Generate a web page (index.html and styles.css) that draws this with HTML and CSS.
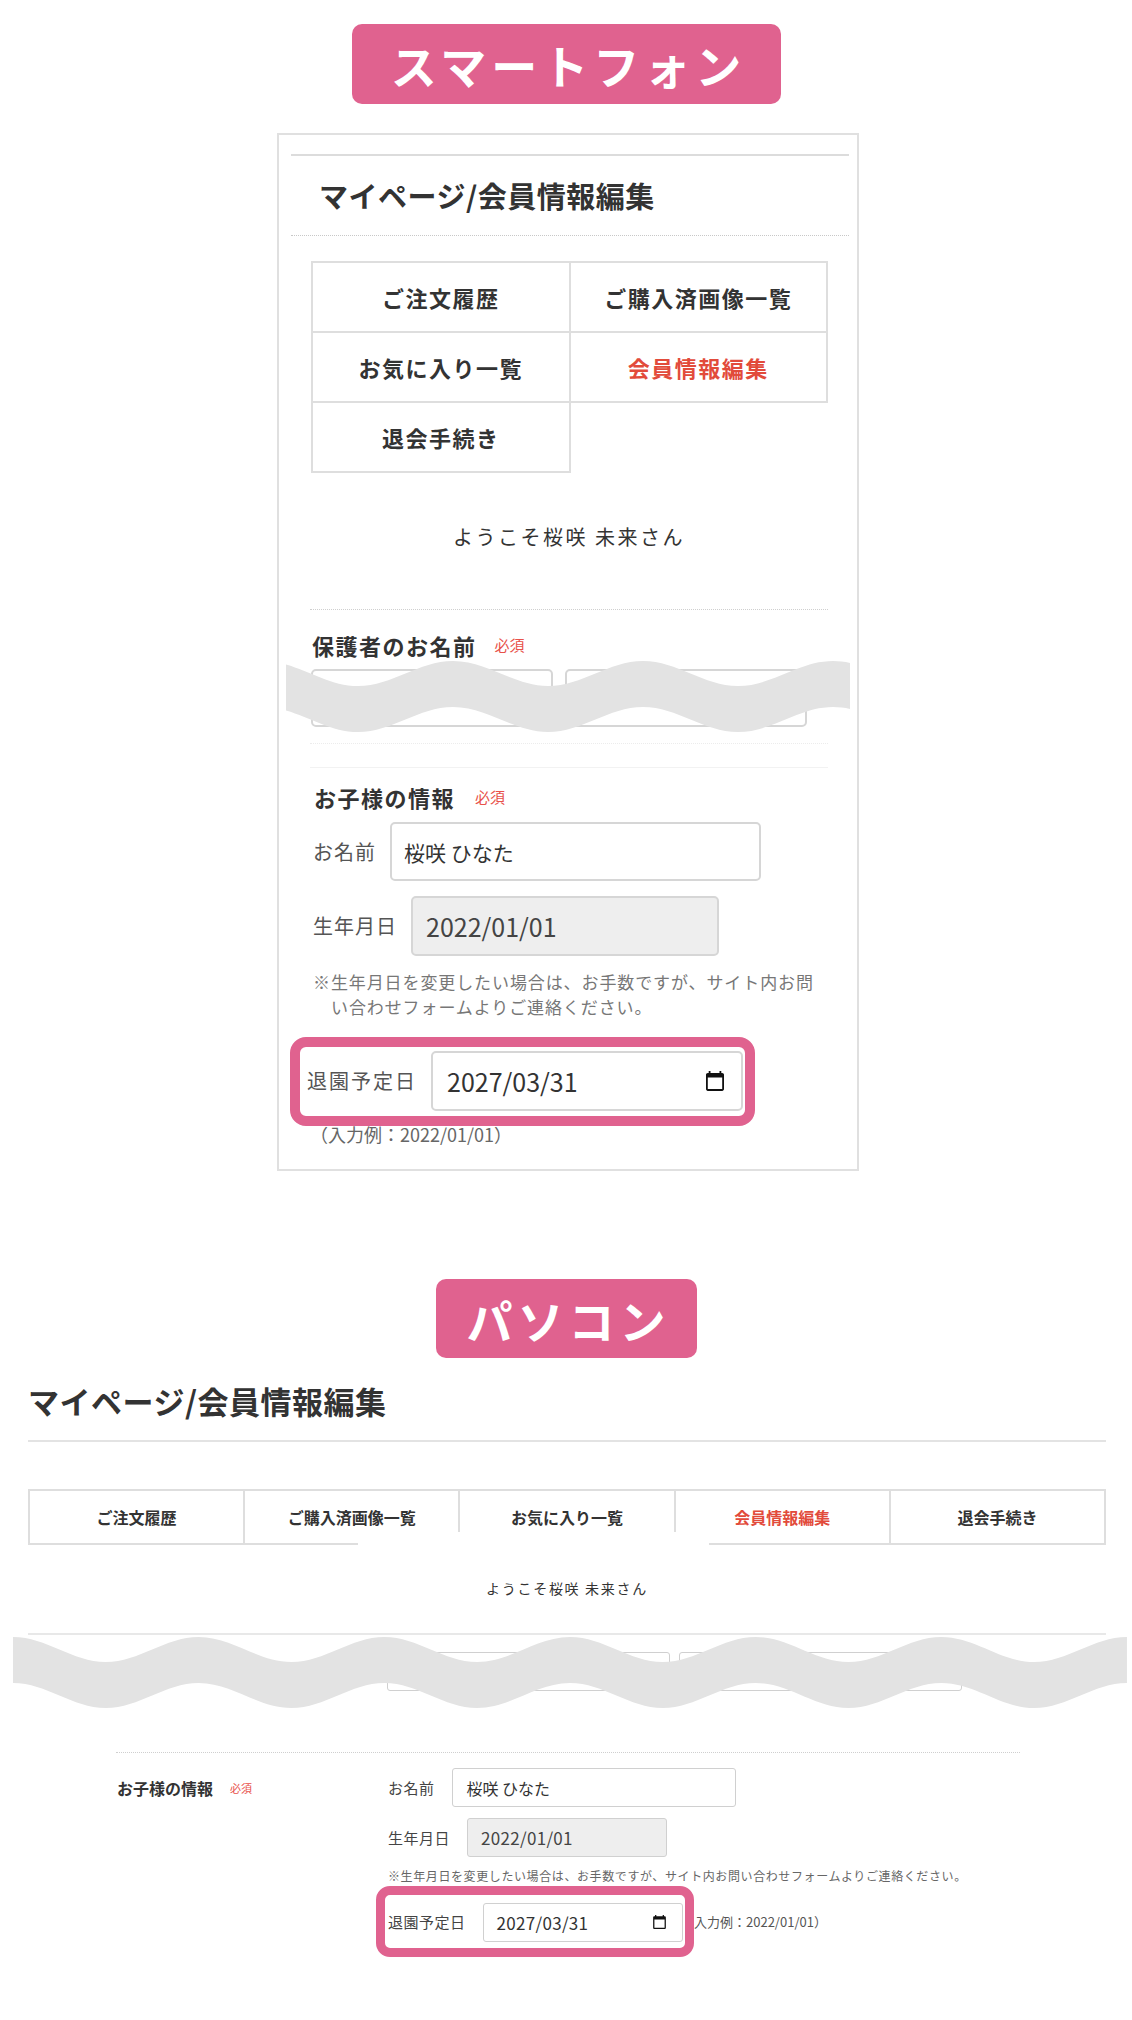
FILE: index.html
```html
<!DOCTYPE html>
<html lang="ja">
<head>
<meta charset="utf-8">
<title>マイページ/会員情報編集</title>
<link rel="stylesheet" href="styles.css">
</head>
<body>
<section class="sp">
  <div class="badge-row"><div class="badge badge-sp">スマートフォン</div></div>
  <div class="phone">
    <div class="sp-head"><h1 class="sp-title">マイページ/会員情報編集</h1></div>
    <div class="sp-body">
      <ul class="sp-menu">
        <li>ご注文履歴</li>
        <li>ご購入済画像一覧</li>
        <li>お気に入り一覧</li>
        <li class="active">会員情報編集</li>
        <li>退会手続き</li>
      </ul>
      <p class="sp-welcome">ようこそ桜咲 未来さん</p>
      <div class="sp-guardian">
        <div class="sp-label">保護者のお名前<span class="req">必須</span></div>
        <div class="sp-inputs"><span class="sp-input"></span><span class="sp-input"></span></div>
        <svg class="wave sp-wave" width="564" height="71" viewBox="0 0 564 71" aria-hidden="true">
          <path fill="#e3e3e3" d="M-23,0 c34.6,0 60.4,25 95,25 c34.6,0 60.4,-25 95,-25 c34.6,0 60.4,25 95,25 c34.6,0 60.4,-25 95,-25 c34.6,0 60.4,25 95,25 c34.6,0 60.4,-25 95,-25 c34.6,0 60.4,25 95,25 l0,46 c-34.6,0 -60.4,-25 -95,-25 c-34.6,0 -60.4,25 -95,25 c-34.6,0 -60.4,-25 -95,-25 c-34.6,0 -60.4,25 -95,25 c-34.6,0 -60.4,-25 -95,-25 c-34.6,0 -60.4,25 -95,25 c-34.6,0 -60.4,-25 -95,-25 z"/>
        </svg>
      </div>
      <div class="sp-child">
        <div class="sp-label sp-label-child">お子様の情報<span class="req req-child">必須</span></div>
        <div class="sp-row sp-row-name">
          <span class="sp-rlabel">お名前</span>
          <span class="sp-field sp-field-name">桜咲 ひなた</span>
        </div>
        <div class="sp-row sp-row-birth">
          <span class="sp-rlabel">生年月日</span>
          <span class="sp-field sp-field-birth">2022/01/01</span>
        </div>
        <p class="sp-note">※生年月日を変更したい場合は、お手数ですが、サイト内お問<br>い合わせフォームよりご連絡ください。</p>
        <div class="sp-mark">
          <span class="sp-rlabel sp-rlabel-leave">退園予定日</span>
          <span class="sp-field sp-field-leave">2027/03/31
            <svg class="cal" width="18" height="20" viewBox="2 1 20 22" aria-hidden="true"><path fill="#111" d="M20 3h-1V1h-2v2H7V1H5v2H4c-1.1 0-2 .9-2 2v16c0 1.1.9 2 2 2h16c1.1 0 2-.9 2-2V5c0-1.1-.9-2-2-2zm0 18H4V8h16v13z"/></svg>
          </span>
        </div>
        <p class="sp-hint">（入力例：2022/01/01）</p>
      </div>
    </div>
  </div>
</section>

<section class="pcs">
  <div class="badge-row"><div class="badge badge-pc">パソコン</div></div>
  <div class="pc">
    <h1 class="pc-title">マイページ/会員情報編集</h1>
    <ul class="pc-tabs">
      <li>ご注文履歴</li>
      <li>ご購入済画像一覧</li>
      <li>お気に入り一覧</li>
      <li class="active">会員情報編集</li>
      <li>退会手続き</li>
      <span class="cutout"></span>
    </ul>
    <p class="pc-welcome">ようこそ桜咲 未来さん</p>
    <div class="pc-guardian">
      <div class="pc-inputs"><span class="pc-input"></span><span class="pc-input"></span></div>
      <svg class="wave pc-wave" width="1114" height="71" viewBox="0 0 1114 71" aria-hidden="true">
        <path fill="#e3e3e3" d="M0,0 c33.81,0 59.02,25 92.83,25 c33.81,0 59.02,-25 92.83,-25 c33.81,0 59.02,25 92.83,25 c33.81,0 59.02,-25 92.83,-25 c33.81,0 59.02,25 92.83,25 c33.81,0 59.02,-25 92.83,-25 c33.81,0 59.02,25 92.83,25 c33.81,0 59.02,-25 92.83,-25 c33.81,0 59.02,25 92.83,25 c33.81,0 59.02,-25 92.83,-25 c33.81,0 59.02,25 92.83,25 c33.81,0 59.02,-25 92.83,-25 l0,46 c-33.81,0 -59.02,25 -92.83,25 c-33.81,0 -59.02,-25 -92.83,-25 c-33.81,0 -59.02,25 -92.83,25 c-33.81,0 -59.02,-25 -92.83,-25 c-33.81,0 -59.02,25 -92.83,25 c-33.81,0 -59.02,-25 -92.83,-25 c-33.81,0 -59.02,25 -92.83,25 c-33.81,0 -59.02,-25 -92.83,-25 c-33.81,0 -59.02,25 -92.83,25 c-33.81,0 -59.02,-25 -92.83,-25 c-33.81,0 -59.02,25 -92.83,25 c-33.81,0 -59.02,-25 -92.83,-25 z"/>
      </svg>
    </div>
    <div class="pc-child">
      <div class="pc-left">お子様の情報<span class="req req-pc">必須</span></div>
      <div class="pc-right">
        <div class="pc-row">
          <span class="pc-rlabel">お名前</span>
          <span class="pc-field pc-field-name">桜咲 ひなた</span>
        </div>
        <div class="pc-row pc-row-birth">
          <span class="pc-rlabel">生年月日</span>
          <span class="pc-field pc-field-birth">2022/01/01</span>
        </div>
        <p class="pc-note">※生年月日を変更したい場合は、お手数ですが、サイト内お問い合わせフォームよりご連絡ください。</p>
        <div class="pc-leave">
          <div class="pc-mark">
            <span class="pc-rlabel">退園予定日</span>
            <span class="pc-field pc-field-leave">2027/03/31
              <svg class="cal" width="13" height="14" viewBox="2 1 20 22" aria-hidden="true"><path fill="#111" d="M20 3h-1V1h-2v2H7V1H5v2H4c-1.1 0-2 .9-2 2v16c0 1.1.9 2 2 2h16c1.1 0 2-.9 2-2V5c0-1.1-.9-2-2-2zm0 18H4V8h16v13z"/></svg>
            </span>
          </div>
          <span class="pc-hint">（入力例：2022/01/01）</span>
        </div>
      </div>
    </div>
  </div>
</section>
</body>
</html>
```

FILE: styles.css
```css
* {
  box-sizing: border-box;
  margin: 0;
  padding: 0;
}

body {
  width: 1132px;
  background: #fff;
  color: #333;
  font-family: "Noto Sans CJK JP", "Noto Sans", sans-serif;
}

/* ---------- badges ---------- */
.badge-row {
  display: flex;
  justify-content: center;
}

.badge {
  display: flex;
  align-items: center;
  justify-content: center;
  background: #e0628f;
  color: #fff;
  font-weight: 700;
  font-size: 46px;
  letter-spacing: 5px;
  padding-left: 5px;
  border-radius: 10px;
}

.badge-sp {
  width: 429px;
  height: 80px;
  margin-top: 24px;
}

.badge-pc {
  width: 261px;
  height: 79px;
  margin-top: 108px;
}

.req {
  color: #e8514a;
  font-weight: 400;
  font-size: 15px;
  letter-spacing: 0;
  margin-left: 18px;
}

.wave {
  position: absolute;
  display: block;
}

.cal {
  display: block;
  flex: none;
}

/* ---------- smartphone ---------- */
.phone {
  width: 582px;
  margin: 29px 0 0 277px;
  border: 2px solid #e0e0e0;
  padding-bottom: 24px;
}

.sp-head {
  margin: 19px 8px 0 12px;
  border-top: 2px solid #dcdcdc;
  border-bottom: 1px dotted #c8c8c8;
  padding: 19px 0 20px 28px;
}

.sp-title {
  font-size: 29px;
  line-height: 40px;
  font-weight: 700;
  letter-spacing: 0.5px;
  color: #333;
}

.sp-body {
  padding: 0 29px 0 31px;
}

.sp-menu {
  list-style: none;
  display: grid;
  grid-template-columns: 1fr 1fr;
  margin-top: 25px;
  margin-left: 1px;
  border-top: 2px solid #dedede;
  border-left: 2px solid #dedede;
}

.sp-menu li {
  height: 70px;
  display: flex;
  align-items: center;
  justify-content: center;
  border-right: 2px solid #dedede;
  border-bottom: 2px solid #dedede;
  font-size: 22px;
  font-weight: 700;
  letter-spacing: 1.5px;
  color: #333;
}

.sp-menu li.active {
  color: #e24b3b;
}

.sp-welcome {
  margin-top: 49px;
  line-height: 30px;
  font-size: 20px;
  letter-spacing: 2.5px;
  text-align: center;
  color: #333;
}

.sp-guardian {
  position: relative;
  margin-top: 57px;
  border-top: 1px dotted #cfcfcf;
  border-bottom: 1px dotted #ececec;
  padding: 19px 0 16px;
}

.sp-label {
  display: flex;
  align-items: center;
  height: 32px;
  font-size: 22px;
  line-height: 32px;
  font-weight: 700;
  letter-spacing: 1.5px;
  padding-left: 2px;
  color: #333;
}

.sp-inputs {
  display: flex;
  gap: 12px;
  margin-top: 8px;
  padding-left: 1px;
}

.sp-input {
  width: 242px;
  height: 58px;
  border: 2px solid #d6d6d6;
  border-radius: 5px;
}

.sp-wave {
  top: 51px;
  left: -24px;
}

.sp-child {
  margin-top: 23px;
  border-top: 1px solid #f2f2f2;
  padding-top: 13px;
}

.sp-label-child {
  padding-left: 4px;
}

.req-child {
  margin-left: 20px;
}

.sp-row {
  display: flex;
  align-items: center;
  gap: 14px;
  margin-left: 3px;
}

.sp-row-name {
  margin-top: 9px;
}

.sp-row-birth {
  margin-top: 15px;
}

.sp-rlabel {
  font-size: 20px;
  line-height: 28px;
  letter-spacing: 1px;
  color: #555;
  white-space: nowrap;
}

.sp-field {
  display: flex;
  align-items: center;
  border: 2px solid #d6d6d6;
  border-radius: 5px;
  color: #333;
}

.sp-field-name {
  width: 371px;
  height: 59px;
  padding-left: 12px;
  font-size: 21px;
}

.sp-field-birth {
  width: 308px;
  height: 60px;
  padding-left: 13px;
  font-size: 25px;
  background: #eeeeee;
  color: #444;
}

.sp-note {
  margin: 13px 0 0 3px;
  font-size: 17px;
  line-height: 25px;
  letter-spacing: 0.9px;
  color: #777;
  padding-left: 18px;
  text-indent: -18px;
  white-space: nowrap;
}

.sp-mark {
  display: flex;
  align-items: center;
  width: 465px;
  height: 89px;
  margin: 18px 0 0 -20px;
  border: 10px solid #e0628f;
  border-radius: 16px;
  padding: 0 2px 1px 7px;
  gap: 14px;
}

.sp-rlabel-leave {
  letter-spacing: 2px;
}

.sp-field-leave {
  width: 312px;
  height: 60px;
  padding: 0 17px 0 14px;
  font-size: 25px;
  justify-content: space-between;
  color: #333;
}

.sp-hint {
  margin-top: -3px;
  font-size: 18px;
  line-height: 22px;
  color: #666;
}

/* ---------- pc ---------- */
.pc {
  width: 1078px;
  margin: 21px 0 0 28px;
}

.pc-title {
  font-size: 31px;
  line-height: 44px;
  font-weight: 700;
  letter-spacing: 0.5px;
  color: #333;
  padding-bottom: 17px;
  border-bottom: 2px solid #e3e3e3;
}

.pc-tabs {
  position: relative;
  list-style: none;
  display: flex;
  height: 56px;
  margin-top: 47px;
  border: 2px solid #dedede;
}

.pc-tabs li {
  flex: 1;
  display: flex;
  align-items: center;
  justify-content: center;
  font-size: 16px;
  font-weight: 700;
  color: #333;
}

.pc-tabs li + li {
  border-left: 2px solid #dedede;
}

.pc-tabs li.active {
  color: #e24b3b;
}

.pc-tabs .cutout {
  position: absolute;
  left: 328px;
  top: 41px;
  width: 351px;
  height: 20px;
  background: #fff;
}

.pc-welcome {
  margin-top: 33px;
  font-size: 14px;
  line-height: 20px;
  letter-spacing: 1.7px;
  text-align: center;
  color: #333;
  padding-bottom: 35px;
  border-bottom: 2px solid #e8e8e8;
}

.pc-guardian {
  position: relative;
  padding-top: 17px;
}

.pc-inputs {
  display: flex;
  gap: 9px;
  margin-left: 359px;
}

.pc-input {
  width: 283px;
  height: 39px;
  border: 1.5px solid #d0d0d0;
  border-radius: 3px;
}

.pc-wave {
  top: 2px;
  left: -15px;
}

.pc-child {
  display: flex;
  margin: 61px 86px 0 88px;
  border-top: 1px dotted #cfcfcf;
  padding-top: 15px;
}

.pc-left {
  display: flex;
  align-items: center;
  height: 39px;
  width: 272px;
  padding-left: 1px;
  font-size: 16px;
  font-weight: 700;
  color: #333;
}

.req-pc {
  font-size: 11px;
  margin-left: 17px;
}

.pc-right {
  display: flex;
  flex-direction: column;
  align-items: flex-start;
}

.pc-row {
  display: flex;
  align-items: center;
  gap: 17px;
}

.pc-row-birth {
  margin-top: 11px;
}

.pc-rlabel {
  font-size: 15px;
  line-height: 20px;
  letter-spacing: 0.5px;
  color: #444;
  white-space: nowrap;
}

.pc-field {
  display: flex;
  align-items: center;
  height: 39px;
  border: 1.5px solid #d0d0d0;
  border-radius: 3px;
  color: #333;
}

.pc-field-name {
  width: 284px;
  padding-left: 14px;
  font-size: 16px;
}

.pc-field-birth {
  width: 200px;
  padding-left: 13px;
  font-size: 17px;
  letter-spacing: 0.3px;
  background: #eeeeee;
  color: #444;
}

.pc-note {
  margin-top: 11px;
  font-size: 12px;
  line-height: 16px;
  letter-spacing: 0.6px;
  color: #666;
  white-space: nowrap;
}

.pc-leave {
  display: flex;
  align-items: center;
  margin: 2px 0 0 -12px;
}

.pc-mark {
  position: relative;
  z-index: 1;
  display: flex;
  align-items: center;
  gap: 17px;
  width: 318px;
  height: 71px;
  border: 9px solid #e0628f;
  border-radius: 14px;
  padding: 1px 2px 0 3px;
}

.pc-field-leave {
  width: 200px;
  padding: 0 16px 0 13px;
  font-size: 17px;
  letter-spacing: 0.3px;
  justify-content: space-between;
}

.pc-hint {
  position: relative;
  margin-left: -13px;
  font-size: 13px;
  color: #555;
  white-space: nowrap;
}
```
